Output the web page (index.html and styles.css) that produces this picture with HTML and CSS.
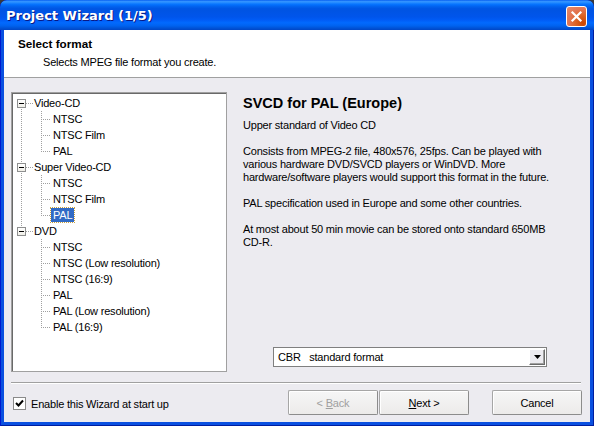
FILE: index.html
```html
<!DOCTYPE html>
<html>
<head>
<meta charset="utf-8">
<link rel="stylesheet" href="styles.css">
</head>
<body>
<div class="window">
  <div class="titlebar">
    <span class="title">Project Wizard (1/5)</span>
    <span class="close"><svg width="13" height="13" viewBox="0 0 13 13"><path d="M2.5 2.5 L10.5 10.5 M10.5 2.5 L2.5 10.5" stroke="#fff" stroke-width="2.2" stroke-linecap="square"/></svg></span>
  </div>
  <div class="client">
    <div class="header">
      <div class="h-title">Select format</div>
      <div class="h-sub">Selects MPEG file format you create.</div>
    </div>
    <div class="main">
      <div class="tree">
        <div class="row root first"><span class="exp"></span><span class="lbl">Video-CD</span></div>
        <div class="row child thru"><span class="lbl">NTSC</span></div>
        <div class="row child thru"><span class="lbl">NTSC Film</span></div>
        <div class="row child thru last"><span class="lbl">PAL</span></div>
        <div class="row root mid"><span class="exp"></span><span class="lbl">Super Video-CD</span></div>
        <div class="row child thru"><span class="lbl">NTSC</span></div>
        <div class="row child thru"><span class="lbl">NTSC Film</span></div>
        <div class="row child thru last"><span class="lbl sel">PAL</span></div>
        <div class="row root end"><span class="exp"></span><span class="lbl">DVD</span></div>
        <div class="row child"><span class="lbl">NTSC</span></div>
        <div class="row child"><span class="lbl">NTSC (Low resolution)</span></div>
        <div class="row child"><span class="lbl">NTSC (16:9)</span></div>
        <div class="row child"><span class="lbl">PAL</span></div>
        <div class="row child"><span class="lbl">PAL (Low resolution)</span></div>
        <div class="row child last"><span class="lbl">PAL (16:9)</span></div>
      </div>
      <div class="info">
        <div class="i-title">SVCD for PAL (Europe)</div>
        <p>Upper standard of Video CD</p>
        <p>Consists from MPEG-2 file, 480x576, 25fps. Can be played with<br>various hardware DVD/SVCD players or WinDVD. More<br>hardware/software players would support this format in the future.</p>
        <p>PAL specification used in Europe and some other countries.</p>
        <p>At most about 50 min movie can be stored onto standard 650MB<br>CD-R.</p>
        <div class="combo"><span class="c-text">CBR&nbsp;&nbsp;&nbsp;standard format</span><span class="c-btn"><svg width="7" height="4" viewBox="0 0 7 4"><path d="M0 0H7L3.5 4Z" fill="#000"/></svg></span></div>
      </div>
    </div>
    <div class="sep"></div>
    <div class="footer">
      <label class="check"><span class="box"><svg width="9" height="9" viewBox="0 0 9 9"><path d="M1 4 L3.5 6.5 L8 1.5" stroke="#000" stroke-width="2" fill="none"/></svg></span><span>Enable this Wizard at start up</span></label>
      <div class="buttons">
        <span class="btn disabled"><span>&lt; <u>B</u>ack</span></span>
        <span class="btn next"><span><u>N</u>ext &gt;</span></span>
        <span class="btn cancel"><span>Cancel</span></span>
      </div>
    </div>
  </div>
</div>
</body>
</html>
```
FILE: styles.css
```css
html, body {
  margin: 0;
  padding: 0;
}
body {
  background: #3a3a3a;
  font-family: "Liberation Sans", Arial, sans-serif;
  font-size: 11px;
  letter-spacing: -0.2px;
  color: #000;
}
.window {
  width: 594px;
  height: 426px;
  display: flex;
  flex-direction: column;
  background: #0a50e0;
  border-radius: 7px 7px 0 0;
  box-shadow: inset 1px 0 #0019cf, inset -1px 0 #001ea0, inset 0 -1px #001ea0;
  overflow: hidden;
}
.titlebar {
  height: 30px;
  flex: none;
  display: flex;
  align-items: center;
  justify-content: space-between;
  padding: 0 6px 0 6px;
  background: linear-gradient(to bottom, #0058ee 0%, #3593ff 4%, #288eff 8%, #127dff 12%, #036ffc 16%, #0262ee 22%, #0057e5 28%, #0054e3 34%, #0055eb 56%, #005bf5 66%, #026afe 76%, #0062ef 86%, #0052d6 94%, #0046c6 100%);
  border-radius: 7px 7px 0 0;
}
.title {
  color: #fff;
  font-family: "DejaVu Sans", sans-serif;
  font-weight: bold;
  font-size: 13px;
  letter-spacing: 0;
  text-shadow: 1px 1px 0 #0a1883;
  padding-top: 1px;
}
.close {
  width: 21px;
  height: 21px;
  box-sizing: border-box;
  border: 1px solid #fff;
  border-radius: 3px;
  background: radial-gradient(circle at 85% 85%, #cc4600 0%, #dc6527 35%, #e27450 60%, #e68b6c 100%);
  display: flex;
  align-items: center;
  justify-content: center;
  margin-top: 2px;
  margin-right: 1px;
}
.client {
  flex: 1;
  margin: 0 4px 4px 4px;
  background: #ecebf0;
  display: flex;
  flex-direction: column;
}
.header {
  height: 48px;
  background: #fff;
  border-bottom: 1px solid #a0a0a0;
  flex: none;
  box-sizing: border-box;
  padding: 7px 0 0 14px;
}
.h-title {
  font-weight: bold;
  font-size: 11.7px;
  letter-spacing: 0;
  height: 13px;
  line-height: 13px;
}
.h-sub {
  padding-left: 25px;
  margin-top: 6px;
  line-height: 13px;
}
.main {
  height: 304px;
  flex: none;
  display: flex;
  padding: 14px 0 0 7px;
  box-sizing: border-box;
}
.tree {
  width: 216px;
  height: 280px;
  box-sizing: border-box;
  background: #fff;
  border: 1px solid #a0a0a0;
  box-shadow: inset 1px 1px #696969;
  padding: 1px 0 0 1px;
}
.row {
  height: 16px;
  display: flex;
  align-items: center;
  background-repeat: no-repeat;
  --dv: repeating-linear-gradient(to bottom, #a0a0a0 0 1px, transparent 1px 2px);
  --dh: repeating-linear-gradient(to right, #a0a0a0 0 1px, transparent 1px 2px);
}
.row:first-child { margin-top: 1px; }
.root {
  padding-left: 4px;
  background-image: var(--dh);
  background-size: 7px 1px;
  background-position: 13px 8px;
}
.root.first {
  background-image: var(--dh), var(--dv);
  background-size: 7px 1px, 1px 8px;
  background-position: 13px 8px, 8px 8px;
}
.root.mid {
  background-image: var(--dh), var(--dv);
  background-size: 7px 1px, 1px 16px;
  background-position: 13px 8px, 8px 0;
}
.root.end {
  background-image: var(--dh), var(--dv);
  background-size: 7px 1px, 1px 8px;
  background-position: 13px 8px, 8px 0;
}
.exp {
  width: 9px;
  height: 9px;
  box-sizing: border-box;
  border: 1px solid #8e8f8f;
  background: linear-gradient(to bottom, #ffffff, #f0efe8);
  flex: none;
  display: flex;
  align-items: center;
  justify-content: center;
}
.exp::after {
  content: "";
  width: 5px;
  height: 1px;
  background: #000;
}
.root .lbl { margin-left: 6px; }
.child {
  padding-left: 38px;
  background-image: var(--dh), var(--dv);
  background-size: 10px 1px, 1px 16px;
  background-position: 28px 8px, 28px 0;
}
.child.last {
  background-size: 10px 1px, 1px 9px;
}
.child.thru {
  background-image: var(--dh), var(--dv), var(--dv);
  background-size: 10px 1px, 1px 16px, 1px 16px;
  background-position: 28px 8px, 28px 0, 8px 0;
}
.child.thru.last {
  background-size: 10px 1px, 1px 9px, 1px 16px;
}
.lbl {
  padding: 0 2px;
  height: 14px;
  line-height: 14px;
  box-sizing: border-box;
  white-space: nowrap;
}
.lbl.sel {
  background: #316ac5;
  color: #fff;
  outline: 1px dotted #c8a040;
}
.info {
  flex: 1;
  padding-left: 16px;
  padding-top: 3px;
  position: relative;
}
.i-title {
  font-weight: bold;
  font-size: 14.5px;
  letter-spacing: 0;
  line-height: 16px;
}
.info p {
  margin: 8px 0 13px 0;
  line-height: 13px;
  white-space: nowrap;
}
.info p + p { margin-top: 0; }
.combo {
  position: absolute;
  left: 46px;
  top: 255px;
  width: 274px;
  height: 20px;
  box-sizing: border-box;
  border: 1px solid #7f7f7f;
  background: #fff;
  display: flex;
  align-items: center;
  justify-content: space-between;
  padding: 0 1px 0 4px;
}
.c-btn {
  width: 16px;
  height: 16px;
  box-sizing: border-box;
  background: #ecebf0;
  border: 1px solid #fff;
  border-right-color: #6a6a6a;
  border-bottom-color: #6a6a6a;
  box-shadow: inset -1px -1px #a0a0a0;
  display: flex;
  align-items: center;
  justify-content: center;
}
.sep {
  margin: 0 9px 0 7px;
  border-top: 1px solid #a0a0a0;
  box-sizing: border-box;
  background: #fff;
  height: 2px;
  flex: none;
}
.footer {
  flex: 1;
  display: flex;
  justify-content: space-between;
  padding: 6px 8px 0 9px;
  box-sizing: border-box;
}
.check {
  display: flex;
  align-items: center;
  height: 13px;
  margin-top: 7px;
  gap: 5px;
}
.box {
  width: 13px;
  height: 13px;
  box-sizing: border-box;
  border: 1px solid #8a8a8a;
  background: #fff;
  display: flex;
  align-items: center;
  justify-content: center;
}
.buttons {
  display: flex;
  height: 25px;
}
.btn {
  width: 90px;
  height: 25px;
  box-sizing: border-box;
  border: 1px solid #a6a6a6;
  border-right-color: #8c8c8c;
  border-bottom-color: #8c8c8c;
  background: linear-gradient(to bottom, #f6f6f6, #ecebea);
  display: flex;
  align-items: center;
  justify-content: center;
  border-radius: 2px;
  box-shadow: inset 1px 1px #fff;
}
.btn.next { margin-left: 1px; }
.btn.cancel { margin-left: 23px; }
.btn.disabled { color: #a0a0a0; }
u { text-decoration: underline; }
```
